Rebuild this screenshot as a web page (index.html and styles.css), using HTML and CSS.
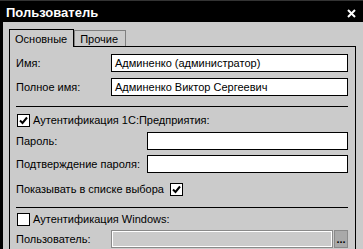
FILE: index.html
```html
<!DOCTYPE html>
<html lang="ru">
<head>
<meta charset="utf-8"/>
<title>Пользователь</title>
<link rel="stylesheet" href="styles.css">
</head>
<body>
<div class="window">
  <div class="titlebar">
    <span class="title">Пользователь</span>
    <svg class="close" width="9" height="9" viewBox="0 0 9 9"><path d="M1 1L8 8M8 1L1 8" stroke="#fff" stroke-width="2"/></svg>
  </div>
  <div class="frame">
    <div class="tabs">
      <div class="tab active">Основные</div>
      <div class="tab">Прочие</div>
    </div>
    <div class="panel">
      <div class="row">
        <span class="label w1">Имя:</span>
        <div class="field">Админенко (администратор)</div>
      </div>
      <div class="row r2">
        <span class="label w1">Полное имя:</span>
        <div class="field">Админенко Виктор Сергеевич</div>
      </div>
      <hr class="sep">
      <div class="check-row c1">
        <span class="box"><svg width="11" height="11" viewBox="0 0 11 11"><path d="M2 5.5L4.5 8L9 2.5" stroke="#000" stroke-width="2" fill="none"/></svg></span>
        <span>Аутентификация 1С:Предприятия:</span>
      </div>
      <div class="row r5">
        <span class="label w2">Пароль:</span>
        <div class="field"></div>
      </div>
      <div class="row r5">
        <span class="label w2">Подтверждение пароля:</span>
        <div class="field"></div>
      </div>
      <div class="check-row show">
        <span>Показывать в списке выбора</span>
        <span class="box"><svg width="11" height="11" viewBox="0 0 11 11"><path d="M2 5.5L4.5 8L9 2.5" stroke="#000" stroke-width="2" fill="none"/></svg></span>
      </div>
      <hr class="sep sep2">
      <div class="check-row c2">
        <span class="box"></span>
        <span>Аутентификация Windows:</span>
      </div>
      <div class="row r4">
        <span class="label w1">Пользователь:</span>
        <div class="field disabled"></div>
        <div class="dots">...</div>
      </div>
    </div>
  </div>
</div>
</body>
</html>
```

FILE: styles.css
```css
body {
  margin: 0;
  background: #cbcbcb;
  font-family: 'Liberation Sans', Arial, sans-serif;
  font-size: 11px;
  color: #000;
  overflow: hidden;
}
.window {
  width: 363px;
  height: 249px;
  overflow: hidden;
}
.titlebar {
  height: 21px;
  background: #000;
  border-top: 1px solid #333;
  display: flex;
  align-items: center;
  justify-content: space-between;
  padding: 0 7px 0 6px;
}
.title {
  color: #fff;
  font-weight: bold;
  font-size: 13px;
  padding-top: 1px;
}
.close {
  margin-top: 4px;
}
.frame {
  border-left: 3px solid #000;
  padding: 7px 7px 0 6px;
  height: 240px;
}
.tabs {
  display: flex;
  align-items: flex-end;
  height: 17px;
}
.tab {
  height: 15px;
  padding: 0 7px 0 5px;
  border: 1px solid #808080;
  border-bottom: none;
  line-height: 16px;
}
.tab.active {
  height: 17px;
  padding: 0 6px 0 5px;
  border-color: #000;
  line-height: 19px;
  position: relative;
  top: 1px;
  background: #cbcbcb;
  z-index: 1;
}
.panel {
  border: 1px solid #000;
  height: 220px;
  padding: 7px 7px 0 6px;
  display: flex;
  flex-direction: column;
}
.row {
  display: flex;
  align-items: center;
  flex: none;
  height: 18px;
}
.r2 {
  margin-top: 6px;
}
.r5 {
  margin-top: 5px;
}
.r4 {
  margin-top: 4px;
}
.label {
  flex: none;
}
.w1 {
  width: 95px;
}
.w2 {
  width: 131px;
}
.field {
  flex: 1;
  height: 16px;
  border: 1px solid #000;
  background: #fff;
  line-height: 16px;
  padding-left: 3px;
  white-space: nowrap;
}
.field.disabled {
  background: #cbcbcb;
  border: 1px solid #8a8a8a;
  box-shadow: inset 0 0 0 1px #fff;
}
.dots {
  width: 12px;
  height: 16px;
  margin-left: 1px;
  background: #a9a9a9;
  border: 1px solid #8a8a8a;
  line-height: 16px;
  text-align: center;
  font-weight: bold;
}
.sep {
  flex: none;
  width: 100%;
  border: none;
  border-top: 1px solid #000;
  margin: 10px 0 0;
}
.sep2 {
  margin-top: 11px;
}
.check-row {
  display: flex;
  align-items: center;
  flex: none;
  gap: 3px;
  height: 14px;
  margin-left: 1px;
}
.c1 {
  margin-top: 6px;
}
.c2 {
  margin-top: 4px;
}
.check-row.show {
  margin: 9px 0 0;
  gap: 6px;
}
.box {
  width: 11px;
  height: 11px;
  border: 1px solid #000;
  background: #fff;
  display: flex;
}
```
